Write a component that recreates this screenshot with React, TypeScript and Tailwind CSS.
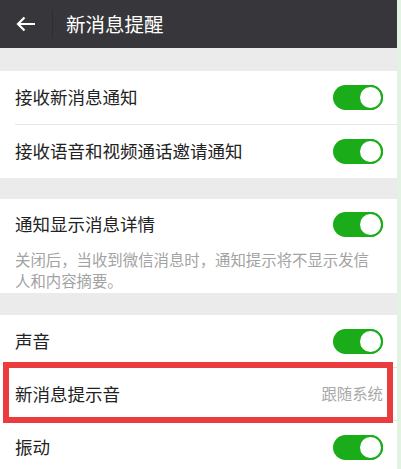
import React from "react";

const font = { fontFamily: '"Noto Sans CJK SC", "Noto Sans", sans-serif' };

function Toggle() {
  return (
    <div className="relative w-[50px] h-[25px] rounded-full bg-[#1aad19] shrink-0">
      <div className="absolute right-0 top-0 w-[25px] h-[25px] rounded-full bg-white border-[2px] border-[#1aad19]" />
    </div>
  );
}

function Row({ label, h, children }: { label: string; h: string; children?: React.ReactNode }) {
  return (
    <div className={`flex items-center justify-between pl-[15px] pr-[14px] bg-white shrink-0 ${h}`}>
      <span className="text-[17.5px] text-[#222]">{label}</span>
      {children}
    </div>
  );
}

function Sep() {
  return (
    <div className="bg-white pl-[15px] shrink-0">
      <div className="h-px bg-[#e6e6e6]" />
    </div>
  );
}

export default function App() {
  return (
    <div className="flex w-[401px] h-[469px] overflow-hidden" style={font}>
      <div className="flex flex-col w-[397px] bg-[#ebebeb]">
        <div className="flex items-center h-[48px] bg-[#37373b] shrink-0">
          <svg width="20" height="16" viewBox="0 0 20 16" className="ml-[16px]">
            <path d="M19 8H2M8.5 1.5L2 8l6.5 6.5" stroke="#fff" strokeWidth="2.2" fill="none" />
          </svg>
          <div className="w-px h-[28px] bg-[#2e2e31] ml-[16px]" />
          <span className="ml-[13px] text-[19.5px] text-white">新消息提醒</span>
        </div>
        <div className="h-[23px] shrink-0" />
        <Row label="接收新消息通知" h="h-[53px]">
          <Toggle />
        </Row>
        <Sep />
        <Row label="接收语音和视频通话邀请通知" h="h-[53px]">
          <Toggle />
        </Row>
        <div className="h-[21px] shrink-0" />
        <div className="bg-white pl-[15px] pr-[14px] pb-[2px] shrink-0">
          <div className="flex items-center justify-between h-[50px]">
            <span className="text-[17.5px] text-[#222]">通知显示消息详情</span>
            <Toggle />
          </div>
          <div className="text-[15.4px] leading-[21px] text-[#a3a3a3] pr-[10px]">
            关闭后，当收到微信消息时，通知提示将不显示发信人和内容摘要。
          </div>
        </div>
        <div className="h-[22px] shrink-0" />
        <Row label="声音" h="h-[52px]">
          <Toggle />
        </Row>
        <Sep />
        <div className="relative shrink-0">
          <Row label="新消息提示音" h="h-[52px]">
            <span className="text-[15.4px] text-[#a8a8a8]">跟随系统</span>
          </Row>
          <div className="absolute left-[3px] right-[4px] top-[-6px] bottom-[-3px] border-[6px] border-[#ea3b3e]" />
        </div>
        <Sep />
        <Row label="振动" h="h-[52px]">
          <Toggle />
        </Row>
      </div>
      <div className="w-[4px] bg-[#e2f3e2] shrink-0" />
    </div>
  );
}
